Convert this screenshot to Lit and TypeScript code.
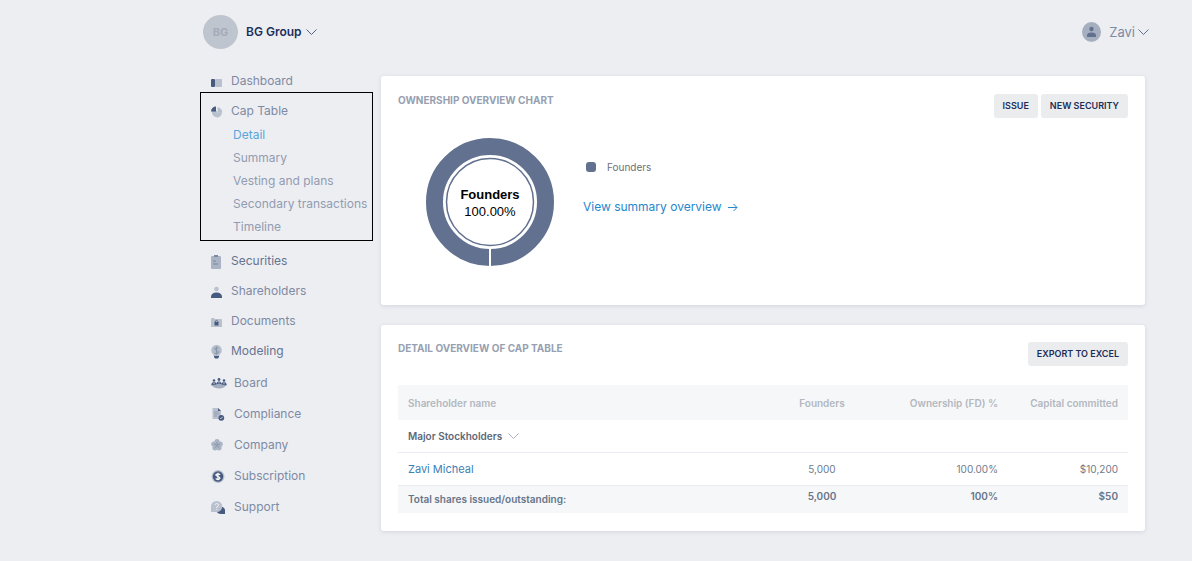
import { LitElement, html, css, svg } from "lit";
import { customElement } from "lit/decorators.js";

const D = "#475a80";
const L = "#b9c1ce";

const icons: Record<string, unknown> = {
  dashboard: svg`<rect x="0" y="4" width="4" height="8" rx="1" fill=${D}/><rect x="4" y="4" width="7" height="8" rx="1" fill=${L}/>`,
  pie: svg`<path d="M6 3v4.500h5a5 5 0 1 1-9.800-1.500H6z" fill=${L}/><path d="M6.500 2.200a5 5 0 0 1 4.700 5.500H6.500z" fill=${L}/><path d="M5 1.500v5H0a5 5 0 0 1 5-5z" fill=${D}/>`,
  clipboard: svg`<rect x="0" y="1" width="10" height="13" rx="1" fill="#aab4c4"/><rect x="3" y="0" width="4" height="2" fill="#7a88a2"/><path d="M2 6h3M2 9h5" stroke="#7a88a2"/>`,
  person: svg`<circle cx="5.500" cy="4" r="2.300" fill=${L}/><path d="M0 13v-1c0-3 2-4.500 5.500-4.500S11 9 11 12v1z" fill=${D}/>`,
  folder: svg`<path d="M0 4q0-1 1-1h2l1 1h6q1 0 1 1v7H0z" fill=${L}/><rect x="3.500" y="7" width="4" height="3.500" fill=${D}/><path d="M4.300 7.300V6q1.200-1.200 2.400 0v1.300" fill="none" stroke=${D} stroke-width=".8"/>`,
  bulb: svg`<path d="M5.500 0a5.300 5.300 0 0 1 3 9.600V11h-6V9.600a5.300 5.300 0 0 1 3-9.600z" fill="#b4bdcb"/><path d="M7.500 3.300Q5.500 2 4 3.200t1.600 2.300T7 8 3.500 8M5.500 1.500v8" fill="none" stroke="#8895ac" stroke-width="1"/><path d="M3 11h5v1L7 13.500H4L3 12z" fill=${D}/>`,
  board: svg`<ellipse cx="8" cy="9.500" rx="6.500" ry="3" fill="#a3afc1"/><g fill=${D}><circle cx="3" cy="4.500" r="1.300"/><circle cx="8" cy="3.500" r="1.400"/><circle cx="13" cy="4.500" r="1.300"/><path d="M.3 9.500q0-3.500 2.700-3.500t2.500 2.500zM5.800 8q0-2.800 2.200-2.800T10.200 8zM10.500 8.500Q10.300 6 13 6t2.700 3.500z"/></g><path d="M3 6.300v2M8 5.500v2M13 6.300v2" stroke="#dfe3ea" stroke-width=".8"/>`,
  doc: svg`<path d="M1.500 1H7l3 3v8H1.500z" fill=${L}/><path d="M7 1l3 3H7z" fill=${D}/><path d="M3 5h4.500M3 7h5M3 9h3" stroke="#8693a9" stroke-width=".8"/><circle cx="10.300" cy="10.800" r="2.900" fill=${D}/><path d="M8.900 10.800l1 1 1.800-2" fill="none" stroke="#dfe3ea" stroke-width=".8"/>`,
  flower: svg`<g fill="#aab4c4"><circle cx="6" cy="3.500" r="2.600"/><circle cx="2.800" cy="6" r="2.600"/><circle cx="9.200" cy="6" r="2.600"/><circle cx="4" cy="9.800" r="2.600"/><circle cx="8" cy="9.800" r="2.600"/></g><path d="M6 7V4M6 7L3 6M6 7l3-1M6 7L4.300 9.700M6 7l1.700 2.700" stroke="#8a97ad" stroke-width="1"/>`,
  dollar: svg`<circle cx="7" cy="7.500" r="6.500" fill=${L}/><circle cx="7" cy="7.500" r="5.200" fill=${D}/><path d="M9.200 5.700Q7.300 4.200 5.500 5.200t1.400 2.300 1.400 2.400-3.600-.4M7 3.700v7.600" fill="none" stroke="#fff" stroke-width="1.200"/>`,
  support: svg`<path d="M8 6q6 1 6 4v4h-4q-4 0-5-4z" fill=${D}/><path d="M5.700 1a5.500 5.500 0 1 1 0 11H0V6.500A5.600 5.600 0 0 1 5.700 1z" fill=${L}/><path d="M4 5q.2-1.500 1.800-1.500T7.400 5 5.700 7v1M5.700 9v1" fill="none" stroke="#edeff4" stroke-width="1"/>`,
};

const chevron = svg`<path d="M.5 1.500L5.500 6.500L10.500 1.500" fill="none" stroke="currentColor"/>`;

interface NavItem { icon: string; label: string; strong?: boolean }
const groupA: NavItem[] = [
  { icon: "clipboard", label: "Securities", strong: true },
  { icon: "person", label: "Shareholders" },
  { icon: "folder", label: "Documents" },
  { icon: "bulb", label: "Modeling", strong: true },
];
const groupB: NavItem[] = [
  { icon: "board", label: "Board" },
  { icon: "doc", label: "Compliance" },
  { icon: "flower", label: "Company" },
  { icon: "dollar", label: "Subscription" },
  { icon: "support", label: "Support" },
];
const subItems = ["Detail", "Summary", "Vesting and plans", "Secondary transactions", "Timeline"];

@customElement("app-root")
export class AppRoot extends LitElement {
  static styles = css`
    :host {
      display: block;
      box-sizing: border-box;
      min-height: 100vh;
      padding: 0 43px 20px 200px;
      background: #edeef2;
      color: #7e8aa3;
      font: 12px/16px Inter, "Liberation Sans", sans-serif;
    }
    * { box-sizing: border-box; }
    a { color: inherit; text-decoration: none; }
    button { font: inherit; color: inherit; border: 0; background: none; padding: 0; cursor: pointer; }
    svg { display: block; flex: none; }
    .top { display: flex; align-items: center; justify-content: space-between; height: 64px; padding-left: 3px; }
    .group, .user { display: flex; align-items: center; }
    .logo {
      display: grid; place-items: center; width: 35px; height: 34px; margin-right: 8px;
      border-radius: 50%; background: #bfc5cf; color: #a4acba; font-size: 11px; font-weight: 700;
    }
    .name { color: #1b2f5b; font-weight: 600; margin-right: 4px; }
    .group button, .user button { display: flex; align-items: center; }
    .group svg { color: #52617f; }
    .user button { font-size: 13px; gap: 3px; }
    .face { margin-right: 8px; }
    .user .chev { color: #5f6f8e; }
    .layout { display: flex; align-items: flex-start; gap: 8px; padding-right: 4px; }
    .side { flex: none; width: 173px; padding-top: 6px; }
    .item { display: flex; align-items: center; height: 30px; padding-left: 11px; }
    .item .icon { width: 20px; padding-top: 2px; }
    .first { height: 22px; }
    .strong { color: #65738f; }
    .boxed { border: 1px solid #000; padding: 6px 0 2px; }
    .boxed .item { height: 24px; padding-left: 10px; }
    .sub { display: block; line-height: 23px; padding-left: 32px; color: #929cb1; white-space: nowrap; }
    .sub.on { color: #5ba5da; }
    .low { padding-top: 5px; }
    .rest { padding-top: 1px; }
    .rest .item { height: 31px; }
    .rest .icon { width: 23px; }
    .main { flex: 1; min-width: 0; display: grid; gap: 20px; padding-top: 12px; }
    .card { background: #fff; border-radius: 3px; padding: 18px 17px; box-shadow: 0 1px 4px rgba(60, 70, 100, 0.14); }
    .detail { padding-top: 17px; }
    .head { display: flex; justify-content: space-between; align-items: flex-start; }
    h2 { margin: 0; font-size: 10px; line-height: 13px; font-weight: 700; color: #979fb1; }
    .actions { display: flex; gap: 3px; }
    .btn { height: 24px; padding: 0 9px; border-radius: 3px; background: #ebecee; color: #1c2d59; font-size: 9px; font-weight: 600; white-space: nowrap; }
    .chart { display: flex; gap: 29px; padding: 20px 28px 21px; }
    .donut-name { font: 700 13px "Liberation Sans", sans-serif; }
    .donut-value { font: 13px "Liberation Sans", sans-serif; }
    .info { display: grid; align-content: start; gap: 20px; padding-top: 19px; }
    .legend { display: flex; align-items: center; gap: 11px; height: 20px; padding-left: 3px; font-size: 10px; color: #6b7077; }
    .swatch { width: 10px; height: 10px; border-radius: 3px; background: #62718f; }
    .view { display: flex; align-items: center; gap: 6px; height: 20px; color: #2687cb; }
    table { width: 100%; margin-top: 19px; border-collapse: collapse; table-layout: fixed; font-size: 10px; line-height: 14px; }
    th, td { padding: 0 10px; text-align: right; font-weight: 400; white-space: nowrap; }
    .c1 { text-align: left; }
    .c2 { width: 100px; text-align: center; }
    .c3 { width: 136px; }
    .c4 { width: 120px; }
    thead tr { height: 35px; background: #f6f7f9; }
    thead th { font-weight: 600; color: #b3b8bf; }
    tbody tr { height: 33px; border-bottom: 1px solid #e9ecf0; color: #6e7b8b; }
    tbody tr.major { height: 32px; color: #5e6878; }
    .major button { display: flex; align-items: center; gap: 6px; font-weight: 600; }
    .major svg { color: #a9b1c0; }
    .person { color: #3a7fb5; font-size: 11px; }
    tfoot tr { height: 28px; background: #f6f7f9; color: #66758a; }
    tfoot th, tfoot td { font-weight: 600; }
    tfoot td { padding-bottom: 6px; }
  `;

  private icon(name: string) {
    return html`<span class="icon"><svg width="16" height="15" viewBox="0 0 16 15" aria-hidden="true">${icons[name]}</svg></span>`;
  }

  private chevron() {
    return html`<svg class="chev" width="11" height="8" viewBox="0 0 11 8" aria-hidden="true">${chevron}</svg>`;
  }

  private item(i: NavItem) {
    return html`<a class="item ${i.strong ? "strong" : ""}" href="#">${this.icon(i.icon)}${i.label}</a>`;
  }

  render() {
    return html`
      <header class="top">
        <div class="group">
          <span class="logo">BG</span>
          <button><span class="name">BG Group</span>${this.chevron()}</button>
        </div>
        <div class="user">
          <svg class="face" width="19" height="20" viewBox="0 0 19 20" aria-hidden="true">
            <ellipse cx="9.500" cy="10" rx="9.500" ry="10" fill="#a5afbf"/>
            <circle cx="9.500" cy="7" r="2.200" fill="#62718f"/>
            <path d="M5 15v-1.500q0-3 4.500-3t4.500 3V15z" fill="#62718f"/>
          </svg>
          <button>Zavi ${this.chevron()}</button>
        </div>
      </header>
      <div class="layout">
        <nav class="side">
          <a class="item first" href="#">${this.icon("dashboard")}Dashboard</a>
          <div class="boxed">
            <a class="item" href="#">${this.icon("pie")}Cap Table</a>
            ${subItems.map((s, n) => html`<a class="sub ${n === 0 ? "on" : ""}" href="#">${s}</a>`)}
          </div>
          <div class="low">${groupA.map((i) => this.item(i))}</div>
          <div class="rest">${groupB.map((i) => this.item(i))}</div>
        </nav>
        <main class="main">
          <section class="card">
            <div class="head">
              <h2>OWNERSHIP OVERVIEW CHART</h2>
              <div class="actions">
                <button class="btn">ISSUE</button>
                <button class="btn">NEW SECURITY</button>
              </div>
            </div>
            <div class="chart">
              <svg width="128" height="128" viewBox="0 0 128 128" role="img" aria-label="Founders 100.00%">
                <circle cx="64" cy="64" r="55.500" fill="none" stroke="#62718f" stroke-width="17"/>
                <circle cx="64" cy="64" r="43.500" fill="none" stroke="#62718f" stroke-width="1.500"/>
                <rect x="63" y="110" width="2" height="18" fill="#fff"/>
                <text class="donut-name" x="64" y="61" text-anchor="middle">Founders</text>
                <text class="donut-value" x="64" y="78" text-anchor="middle">100.00%</text>
              </svg>
              <div class="info">
                <div class="legend"><span class="swatch"></span>Founders</div>
                <a class="view" href="#">View summary overview
                  <svg width="10" height="9" viewBox="0 0 10 9" aria-hidden="true"><path d="M0 4.500h9M5.500 1L9 4.500 5.500 8" fill="none" stroke="currentColor"/></svg>
                </a>
              </div>
            </div>
          </section>
          <section class="card detail">
            <div class="head">
              <h2>DETAIL OVERVIEW OF CAP TABLE</h2>
              <button class="btn">EXPORT TO EXCEL</button>
            </div>
            <table>
              <thead>
                <tr><th class="c1">Shareholder name</th><th class="c2">Founders</th><th class="c3">Ownership (FD) %</th><th class="c4">Capital committed</th></tr>
              </thead>
              <tbody>
                <tr class="major"><th class="c1" colspan="4"><button>Major Stockholders ${this.chevron()}</button></th></tr>
                <tr><td class="c1"><a class="person" href="#">Zavi Micheal</a></td><td class="c2">5,000</td><td>100.00%</td><td>$10,200</td></tr>
              </tbody>
              <tfoot>
                <tr><th class="c1">Total shares issued/outstanding:</th><td class="c2">5,000</td><td>100%</td><td>$50</td></tr>
              </tfoot>
            </table>
          </section>
        </main>
      </div>
    `;
  }
}
